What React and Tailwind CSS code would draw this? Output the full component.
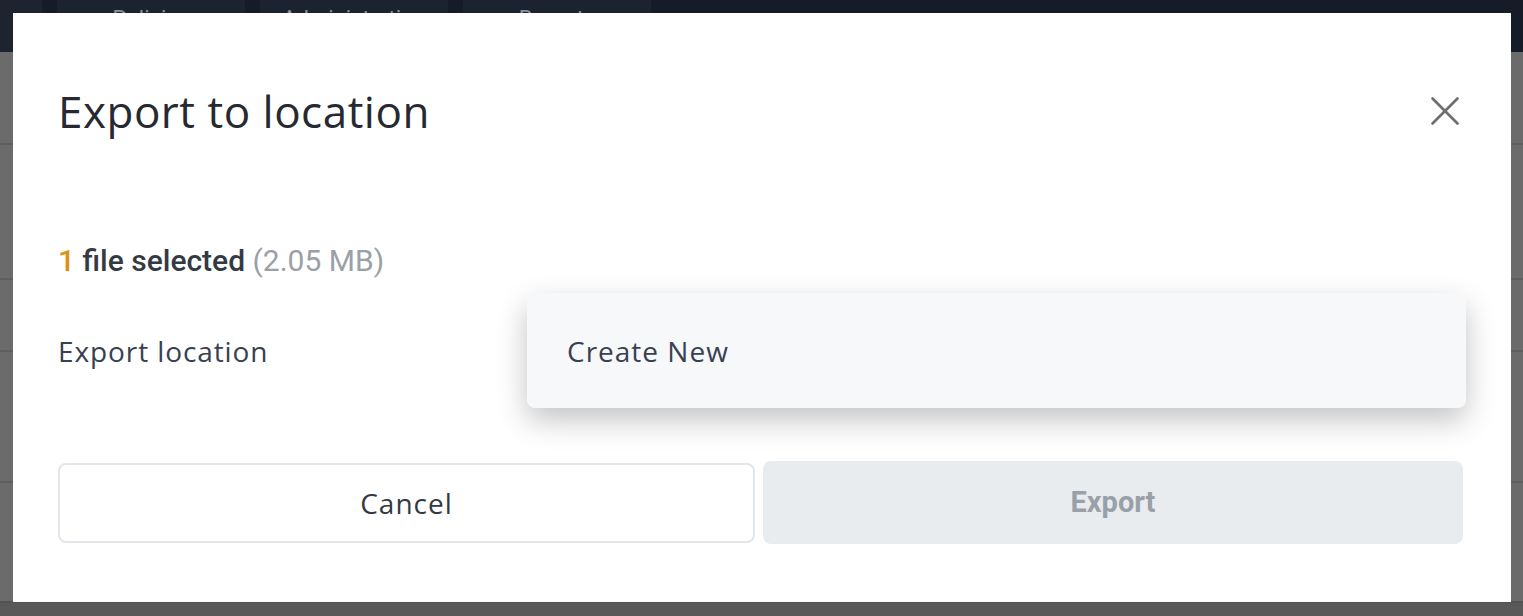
import { X } from 'lucide-react'

const quick = { fontFamily: '"Open Sans", "Noto Sans", sans-serif' }
const roboto = { fontFamily: 'Roboto, "Liberation Sans", sans-serif' }

function Background() {
  return (
    <div className="w-full h-[616px] bg-[#6b6b6b] flex flex-col">
      <div className="h-[52px] bg-[#151c28] flex items-stretch shrink-0">
        <div className="w-[42px] bg-[#1d2430]" />
        <div className="flex gap-[15px] ml-[15px]" style={roboto}>
          {['Policies', 'Administration', 'Reports'].map((t) => (
            <div key={t} className="w-[188px] bg-[#1b2230] text-[#8b919a] text-[22px] flex justify-center pt-[2px]">
              {t}
            </div>
          ))}
        </div>
      </div>
      <div className="h-[93px] border-b-2 border-[#5f5f5f]" />
      <div className="h-[135px] border-b-2 border-[#5f5f5f]" />
      <div className="h-[72px] border-b-2 border-[#5f5f5f]" />
      <div className="h-[131px] border-b-2 border-[#5f5f5f]" />
      <div className="h-[118px]" />
      <div className="flex-1 bg-[#595959] border-t-2 border-[#525252]" />
    </div>
  )
}

export default function App() {
  return (
    <div className="relative w-[1523px] h-[616px] overflow-hidden">
      <Background />
      <div className="absolute left-[13px] top-[13px] w-[1498px] h-[589px] bg-white px-[45px]">
        <div className="h-[48px] mt-[74px] flex items-center justify-between">
          <h2 className="text-[44px] leading-[48px] tracking-[0.5px] text-[#262a30]" style={quick}>
            Export to location
          </h2>
          <button className="w-[50px] h-[48px] -mr-[4px] flex items-center justify-center text-[#6e6e6e]">
            <X size={50} strokeWidth={1.25} />
          </button>
        </div>

        <p className="mt-[110px] text-[30px] leading-[32px] font-medium text-[#343a44]" style={roboto}>
          <span className="text-[#e0900f]">1</span> file selected{' '}
          <span className="text-[#9ba0a8] font-normal">(2.05 MB)</span>
        </p>

        <div className="mt-[16px] h-[115px] flex items-center">
          <span className="w-[469px] text-[28px] tracking-[0.9px] text-[#374151]" style={quick}>
            Export location
          </span>
          <div className="relative flex-1 h-full">
            <div className="absolute inset-0 bg-[#f7f8fa] rounded-[8px] shadow-[0_12px_30px_rgba(0,0,0,0.24)] flex items-center px-[40px]">
              <span className="text-[28px] tracking-[1px] text-[#374151]" style={quick}>Create New</span>
            </div>
          </div>
        </div>

        <div className="mt-[53px] w-[1405px] grid grid-cols-[697px_1fr] gap-[8px] items-center">
          <button className="h-[80px] bg-white border-2 border-[#e1e6ea] rounded-[8px] text-[28px] tracking-[1px] text-[#343a44]" style={quick}>
            Cancel
          </button>
          <button className="h-[83px] bg-[#e8ecef] rounded-[8px] text-[29px] font-bold text-[#9aa0a8]" style={roboto}>
            Export
          </button>
        </div>
      </div>
    </div>
  )
}
